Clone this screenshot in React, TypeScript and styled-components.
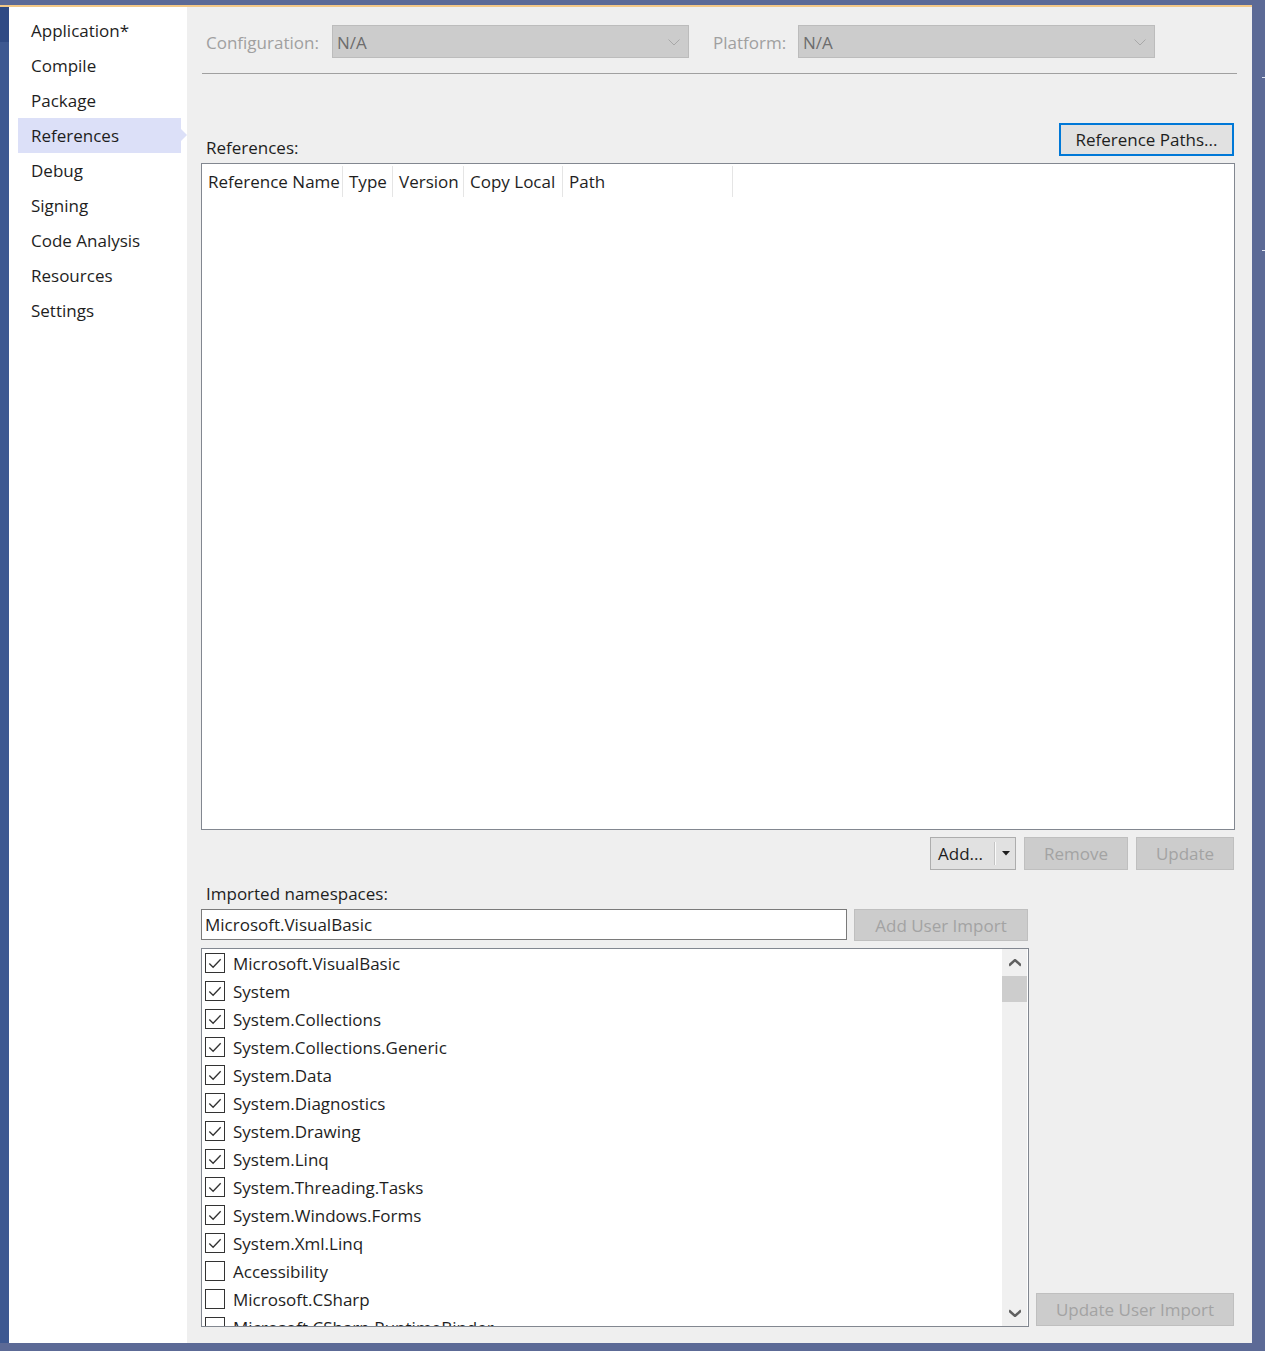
import React from "react";
import styled, { createGlobalStyle } from "styled-components";

const GlobalStyle = createGlobalStyle`
  html, body {
    margin: 0;
    padding: 0;
    background: #5c6a96;
  }
  body {
    font-family: "Open Sans", "Noto Sans", sans-serif;
    font-size: 17px;
    color: #1e1e1e;
  }
  * {
    box-sizing: border-box;
  }
`;

const sections = [
  "Application*",
  "Compile",
  "Package",
  "References",
  "Debug",
  "Signing",
  "Code Analysis",
  "Resources",
  "Settings",
];

const columns = [
  { title: "Reference Name", width: 141 },
  { title: "Type", width: 50 },
  { title: "Version", width: 71 },
  { title: "Copy Local", width: 99 },
  { title: "Path", width: 170 },
];

const namespaces: { name: string; checked: boolean }[] = [
  { name: "Microsoft.VisualBasic", checked: true },
  { name: "System", checked: true },
  { name: "System.Collections", checked: true },
  { name: "System.Collections.Generic", checked: true },
  { name: "System.Data", checked: true },
  { name: "System.Diagnostics", checked: true },
  { name: "System.Drawing", checked: true },
  { name: "System.Linq", checked: true },
  { name: "System.Threading.Tasks", checked: true },
  { name: "System.Windows.Forms", checked: true },
  { name: "System.Xml.Linq", checked: true },
  { name: "Accessibility", checked: false },
  { name: "Microsoft.CSharp", checked: false },
  { name: "Microsoft.CSharp.RuntimeBinder", checked: false },
];

export default function App() {
  return (
    <>
      <GlobalStyle />
      <Frame>
        <TopBar />
        <Body>
          <LeftEdge />
          <Sidebar>
            {sections.map((s) => (
              <NavItem key={s} $active={s === "References"}>
                {s}
              </NavItem>
            ))}
          </Sidebar>
          <Main>
            <ConfigRow>
              <FieldLabel $width={126}>Configuration:</FieldLabel>
              <Combo>
                <span>N/A</span>
                <Chevron />
              </Combo>
              <FieldLabel $width={85} style={{ marginLeft: 24 }}>
                Platform:
              </FieldLabel>
              <Combo>
                <span>N/A</span>
                <Chevron />
              </Combo>
            </ConfigRow>
            <Separator />

            <RefHeader>
              <SectionLabel>References:</SectionLabel>
              <PathsButton>Reference Paths...</PathsButton>
            </RefHeader>
            <ListView>
              <HeaderRow>
                {columns.map((c) => (
                  <HeaderCell key={c.title} $width={c.width}>
                    {c.title}
                  </HeaderCell>
                ))}
              </HeaderRow>
            </ListView>

            <ButtonRow>
              <SplitButton>
                <span>Add...</span>
                <SplitDivider />
                <SplitArrow viewBox="0 0 8 5" width="8" height="5">
                  <path d="M0 0h8L4 4.5z" fill="#1e1e1e" />
                </SplitArrow>
              </SplitButton>
              <Button disabled $width={104}>
                Remove
              </Button>
              <Button disabled $width={98}>
                Update
              </Button>
            </ButtonRow>

            <SectionLabel style={{ marginTop: 13 }}>Imported namespaces:</SectionLabel>
            <ImportGrid>
              <InputRow>
                <TextInput defaultValue="Microsoft.VisualBasic" />
                <Button disabled $width={174} $height={32}>
                  Add User Import
                </Button>
              </InputRow>
              <span />
              <CheckList>
                <CheckItems>
                  {namespaces.map((n) => (
                    <CheckRow key={n.name}>
                      <CheckBox>
                        {n.checked && (
                          <svg viewBox="0 0 19 19" width="19" height="19">
                            <path
                              d="M3.5 9.5l4 4 8-8.5"
                              fill="none"
                              stroke="#333"
                              strokeWidth="1.4"
                            />
                          </svg>
                        )}
                      </CheckBox>
                      {n.name}
                    </CheckRow>
                  ))}
                </CheckItems>
                <ScrollBar>
                  <ScrollArrow viewBox="0 0 12 8" width="12" height="8">
                    <path d="M0 6.5L6 1l6 5.5" fill="none" stroke="#606060" strokeWidth="2.4" />
                  </ScrollArrow>
                  <Thumb />
                  <ScrollSpacer />
                  <ScrollArrow viewBox="0 0 12 8" width="12" height="8">
                    <path d="M0 1.5L6 7l6-5.5" fill="none" stroke="#606060" strokeWidth="2.4" />
                  </ScrollArrow>
                </ScrollBar>
              </CheckList>
              <Button disabled $width={198} style={{ alignSelf: "end", marginBottom: 1 }}>
                Update User Import
              </Button>
            </ImportGrid>
          </Main>
          <RightEdge>
            <EdgeTick />
            <EdgeTick style={{ marginTop: 172 }} />
          </RightEdge>
        </Body>
        <BottomBar />
      </Frame>
    </>
  );
}

function Chevron() {
  return (
    <svg viewBox="0 0 12 7" width="12" height="7">
      <path d="M0.5 0.5l5.5 5.5 5.5-5.5" fill="none" stroke="#a8a8a8" strokeWidth="1" />
    </svg>
  );
}

const Frame = styled.div`
  width: 1265px;
  height: 1351px;
  display: flex;
  flex-direction: column;
  background: #5c6a96;
`;

const TopBar = styled.div`
  height: 7px;
  width: 1252px;
  border-top: 5px solid #5c6a96;
  background: #f4c886;
`;

const Body = styled.div`
  display: flex;
  height: 1336px;
`;

const BottomBar = styled.div`
  height: 8px;
  background: #5c6a96;
`;

const LeftEdge = styled.div`
  width: 9px;
  background: linear-gradient(#2f4a84 0, #2f4a84 35px, #3d5891 35px);
`;

const RightEdge = styled.div`
  width: 13px;
  display: flex;
  flex-direction: column;
  align-items: flex-end;
  padding-top: 70px;
`;

const EdgeTick = styled.div`
  width: 3px;
  height: 1px;
  background: #dfe3f0;
`;

const Sidebar = styled.div`
  width: 178px;
  background: #ffffff;
  padding-top: 6px;
  display: flex;
  flex-direction: column;
`;

const NavItem = styled.div<{ $active?: boolean }>`
  position: relative;
  height: 35px;
  line-height: 35px;
  margin-left: 9px;
  width: 163px;
  padding-left: 13px;
  font-size: 17px;
  color: #1e1e1e;
  background: ${(p) => (p.$active ? "#dce0f8" : "transparent")};

  &::after {
    content: "";
    display: ${(p) => (p.$active ? "block" : "none")};
    position: absolute;
    right: -6px;
    top: 11px;
    border-left: 6px solid #dce0f8;
    border-top: 6px solid transparent;
    border-bottom: 6px solid transparent;
  }
`;

const Main = styled.div`
  width: 1065px;
  background: #efefef;
  padding: 18px 17px 16px 14px;
  display: flex;
  flex-direction: column;
`;

const ConfigRow = styled.div`
  display: flex;
  align-items: center;
  padding-left: 5px;
  height: 33px;
`;

const FieldLabel = styled.div<{ $width: number }>`
  width: ${(p) => p.$width}px;
  color: #a0a0a0;
  padding-top: 1px;
`;

const Combo = styled.div`
  width: 357px;
  height: 33px;
  background: #cccccc;
  border: 1px solid #bcbcbc;
  display: flex;
  align-items: center;
  justify-content: space-between;
  padding: 1px 8px 0 4px;
  color: #6d6d6d;
`;

const Separator = styled.div`
  height: 1px;
  background: #a0a0a0;
  margin: 15px -2px 0 1px;
`;

const RefHeader = styled.div`
  display: flex;
  justify-content: space-between;
  align-items: flex-end;
  margin-top: 49px;
`;

const SectionLabel = styled.div`
  padding-left: 5px;
  line-height: 22px;
  margin-bottom: -3px;
  color: #1e1e1e;
`;

const Button = styled.button<{ $width: number; $height?: number }>`
  width: ${(p) => p.$width}px;
  height: ${(p) => p.$height ?? 33}px;
  font-family: inherit;
  font-size: 17px;
  background: ${(p) => (p.disabled ? "#cccccc" : "#e1e1e1")};
  color: ${(p) => (p.disabled ? "#a3a3a3" : "#1e1e1e")};
  border: 1px solid ${(p) => (p.disabled ? "#bfbfbf" : "#adadad")};
  padding: 0;
  border-radius: 0;
`;

const PathsButton = styled(Button).attrs({ $width: 175 })`
  border: 2px solid #0078d7;
  margin-right: 1px;
`;

const ListView = styled.div`
  margin-top: 7px;
  height: 668px;
  background: #ffffff;
  border: 1px solid #828790;
`;

const HeaderRow = styled.div`
  display: flex;
  height: 33px;
  padding-top: 2px;
`;

const HeaderCell = styled.div<{ $width: number }>`
  width: ${(p) => p.$width}px;
  padding-left: 6px;
  line-height: 31px;
  border-right: 1px solid #e5e5e5;
  white-space: nowrap;
`;

const ButtonRow = styled.div`
  display: flex;
  justify-content: flex-end;
  gap: 8px;
  margin-top: 7px;
  margin-right: 1px;
`;

const SplitButton = styled.div`
  width: 86px;
  height: 33px;
  background: #e1e1e1;
  border: 1px solid #adadad;
  display: flex;
  align-items: center;
  padding-left: 7px;
`;

const SplitDivider = styled.div`
  width: 1px;
  height: 23px;
  background: #c4c4c4;
  box-shadow: 1px 0 0 #fafafa;
  margin-left: 11px;
`;

const SplitArrow = styled.svg`
  margin-left: 7px;
`;

const ImportGrid = styled.div`
  display: grid;
  grid-template-columns: 828px 198px;
  column-gap: 7px;
  row-gap: 7px;
  margin-top: 7px;
  flex: 1;
  grid-template-rows: 32px 1fr;
`;

const InputRow = styled.div`
  display: flex;
  gap: 7px;
`;

const TextInput = styled.input`
  width: 646px;
  height: 31px;
  border: 1px solid #7a7a7a;
  background: #ffffff;
  font-family: inherit;
  font-size: 17px;
  color: #1e1e1e;
  padding: 0 3px;
  outline: none;
`;

const CheckList = styled.div`
  border: 1px solid #828790;
  background: #ffffff;
  display: flex;
  overflow: hidden;
  height: 379px;
`;

const CheckItems = styled.div`
  flex: 1;
  overflow: hidden;
  padding-left: 3px;
`;

const CheckRow = styled.div`
  height: 28px;
  display: flex;
  align-items: center;
  gap: 8px;
  white-space: nowrap;
`;

const CheckBox = styled.div`
  width: 20px;
  height: 20px;
  border: 1px solid #333333;
  background: #ffffff;
  display: flex;
  align-items: center;
  justify-content: center;
  flex-shrink: 0;
`;

const ScrollBar = styled.div`
  width: 25px;
  margin-right: 1px;
  background: #f0f0f0;
  display: flex;
  flex-direction: column;
  align-items: center;
`;

const ScrollArrow = styled.svg`
  margin: 10px 0 9px;
`;

const Thumb = styled.div`
  width: 25px;
  height: 26px;
  background: #cdcdcd;
`;

const ScrollSpacer = styled.div`
  flex: 1;
`;
